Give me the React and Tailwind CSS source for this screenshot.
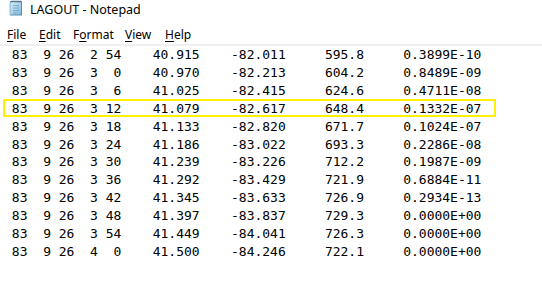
import React from 'react';

// Fixed-width columns, the way the Fortran writer laid them out
const pad = (v, n) => String(v).padStart(n, ' ');

const rows = [
  [83, 9, 26, 2, 54, '40.915', '-82.011', '595.8', '0.3899E-10'],
  [83, 9, 26, 3, 0, '40.970', '-82.213', '604.2', '0.8489E-09'],
  [83, 9, 26, 3, 6, '41.025', '-82.415', '624.6', '0.4711E-08'],
  [83, 9, 26, 3, 12, '41.079', '-82.617', '648.4', '0.1332E-07'],
  [83, 9, 26, 3, 18, '41.133', '-82.820', '671.7', '0.1024E-07'],
  [83, 9, 26, 3, 24, '41.186', '-83.022', '693.3', '0.2286E-08'],
  [83, 9, 26, 3, 30, '41.239', '-83.226', '712.2', '0.1987E-09'],
  [83, 9, 26, 3, 36, '41.292', '-83.429', '721.9', '0.6884E-11'],
  [83, 9, 26, 3, 42, '41.345', '-83.633', '726.9', '0.2934E-13'],
  [83, 9, 26, 3, 48, '41.397', '-83.837', '729.3', '0.0000E+00'],
  [83, 9, 26, 3, 54, '41.449', '-84.041', '726.3', '0.0000E+00'],
  [83, 9, 26, 4, 0, '41.500', '-84.246', '722.1', '0.0000E+00'],
];

const formatRow = ([yr, mo, dy, hr, mn, lat, lon, alt, val]) =>
  pad(yr, 3) + pad(mo, 3) + pad(dy, 3) + pad(hr, 3) + pad(mn, 3) +
  pad(lat, 10) + pad(lon, 11) + pad(alt, 10) + pad(val, 15);

const NotepadIcon = () => (
  <svg width="16" height="16" viewBox="0 0 16 16">
    <defs>
      <linearGradient id="pad" x1="0" y1="0" x2="1" y2="1">
        <stop offset="0" stopColor="#d9eef9" />
        <stop offset="1" stopColor="#7fb6d8" />
      </linearGradient>
    </defs>
    <rect x="2.5" y="1.5" width="11" height="13.5" fill="url(#pad)" stroke="#5b8db0" />
    <rect x="1.5" y="2.5" width="1.5" height="12.5" fill="#9cc6e2" />
    <path d="M5 5.5h6M5 8h6M5 10.5h6M5 13h4" stroke="#6fa2c6" strokeWidth="0.8" />
    <path d="M4 0.5v2M6 0.5v2M8 0.5v2M10 0.5v2M12 0.5v2" stroke="#4f5f6e" strokeWidth="0.9" />
  </svg>
);

// [before, mnemonic, after, slot width]
const menus = [
  ['', 'F', 'ile', 'w-[32px]'],
  ['', 'E', 'dit', 'w-[34px]'],
  ['F', 'o', 'rmat', 'w-[52px]'],
  ['', 'V', 'iew', 'w-[40px]'],
  ['', 'H', 'elp', 'w-[34px]'],
];

export default function App() {
  return (
    <div className="w-[542px] h-[306px] bg-white overflow-hidden text-black">
      {/* title bar */}
      <div className="h-[26px] flex items-start pl-[8px] gap-[6px] font-['Noto_Sans',sans-serif] text-[12.5px]">
        <NotepadIcon />
        <span className="leading-[20px]">LAGOUT - Notepad</span>
      </div>

      {/* menu bar */}
      <div className="h-[18px] flex items-center pl-[7px] font-['Noto_Sans',sans-serif] text-[12px] border-b-2 border-[#f0f0f0] box-content">
        {menus.map(([pre, key, rest, w]) => (
          <span key={key + rest} className={w}>
            {pre}
            <span className="underline underline-offset-2">{key}</span>
            {rest}
          </span>
        ))}
      </div>

      {/* text area */}
      <div className="pl-[4px] font-['DejaVu_Sans_Mono',monospace] text-[13px] leading-[17.9px]">
        {rows.map((r, i) => (
          <div key={i} className="relative whitespace-pre">
            {formatRow(r)}
            {i === 3 && (
              <span className="absolute left-[-1px] top-[-0.5px] w-[493px] h-[18px] border-2 border-[#fff000]" />
            )}
          </div>
        ))}
      </div>
    </div>
  );
}
